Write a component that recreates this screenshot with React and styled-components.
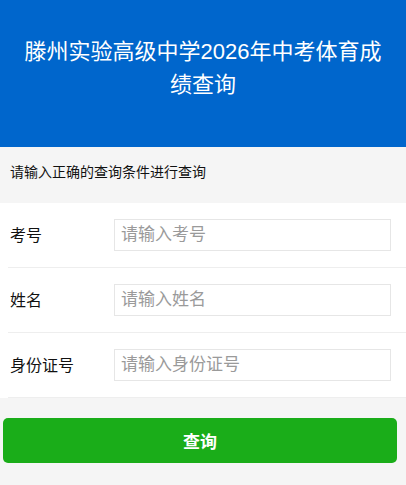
import React from 'react';
import styled, { createGlobalStyle } from 'styled-components';

const GlobalStyle = createGlobalStyle`
  html, body {
    margin: 0;
    padding: 0;
    background-color: #f5f5f5;
    font-family: "Liberation Sans", "Noto Sans CJK SC", sans-serif;
  }
  * {
    box-sizing: border-box;
  }
`;

const Page = styled.div`
  min-height: 485px;
  background-color: #f5f5f5;
`;

const Header = styled.div`
  background-color: #0066cc;
  height: 147px;
  padding: 35px 15px 0;
`;

const Title = styled.h1`
  margin: 0;
  color: #ffffff;
  font-size: 22px;
  font-weight: normal;
  line-height: 33px;
  text-align: center;
`;

const Hint = styled.div`
  height: 56px;
  padding: 15px 10px 0;
  font-size: 14px;
  line-height: 20px;
  color: #111111;
`;

const Form = styled.div`
  background-color: #ffffff;
`;

const Row = styled.div`
  display: flex;
  align-items: center;
  height: 65px;
  margin-left: 8px;
  padding: 0 15px 0 2px;
  border-bottom: 1px solid #eeeeee;
`;

const Label = styled.label`
  width: 104px;
  flex-shrink: 0;
  font-size: 16px;
  color: #111111;
  margin-top: -3px;
`;

const Input = styled.input`
  flex: 1;
  height: 32px;
  padding: 0 6px;
  border: 1px solid #e6e6e6;
  border-radius: 0;
  outline: none;
  font-family: inherit;
  font-size: 17px;
  color: #333333;

  &::placeholder {
    color: #9a9a9a;
  }
`;

const Actions = styled.div`
  padding: 20px 9px 20px 3px;
`;

const SubmitButton = styled.button`
  display: block;
  width: 100%;
  height: 45px;
  border: none;
  border-radius: 5px;
  background-color: #1aad19;
  color: #ffffff;
  font-family: inherit;
  font-size: 17px;
  font-weight: bold;
  cursor: pointer;
`;

function App() {
  const fields = [
    { label: '考号', placeholder: '请输入考号' },
    { label: '姓名', placeholder: '请输入姓名' },
    { label: '身份证号', placeholder: '请输入身份证号' },
  ];

  return (
    <Page>
      <GlobalStyle />
      <Header>
        <Title>滕州实验高级中学2026年中考体育成绩查询</Title>
      </Header>
      <Hint>请输入正确的查询条件进行查询</Hint>
      <Form>
        {fields.map((field) => (
          <Row key={field.label}>
            <Label>{field.label}</Label>
            <Input type="text" placeholder={field.placeholder} />
          </Row>
        ))}
      </Form>
      <Actions>
        <SubmitButton type="button">查询</SubmitButton>
      </Actions>
    </Page>
  );
}

export default App;
